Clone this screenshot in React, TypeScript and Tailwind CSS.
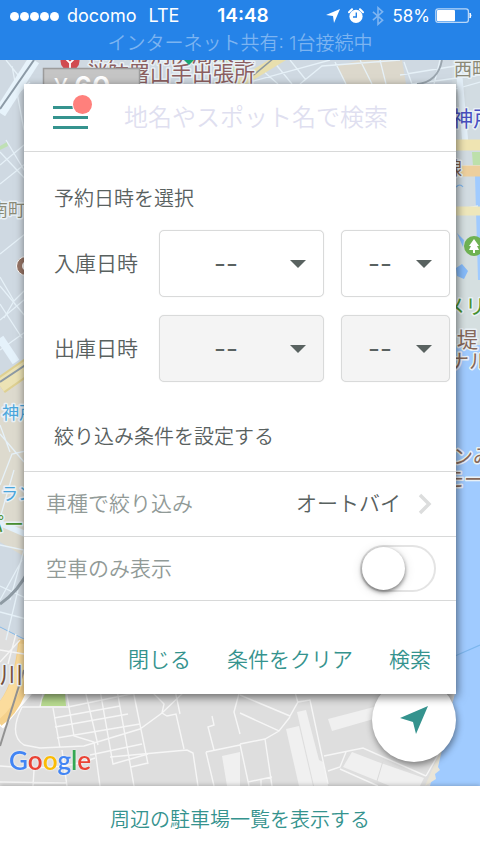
import { useState } from "react";

const teal = "#35938e";

function StatusBar() {
  return (
    <header className="relative z-10 flex h-[60px] shrink-0 flex-col bg-[#2583e8] text-white">
      <div className="grid h-8 grid-cols-3 items-center pr-2 pl-[10px]">
        <div className="flex items-center gap-2 text-[18px] leading-6 whitespace-nowrap">
          <div className="flex gap-px">
            {[0, 1, 2, 3, 4].map((n) => (
              <span key={n} className="size-[9px] rounded-full bg-white" />
            ))}
          </div>
          <span>docomo</span>
          <span className="pl-1">LTE</span>
        </div>
        <span className="pl-1 text-center text-[19px] leading-6 font-semibold">14:48</span>
        <div className="flex items-center justify-end gap-2 whitespace-nowrap">
          <svg width="14" height="14" viewBox="0 0 14 14" fill="#fff" aria-hidden="true">
            <path d="M14 0 8 14 7 7 0 6Z" />
          </svg>
          <svg width="16" height="16" viewBox="0 0 16 16" aria-hidden="true">
            <circle cx="8" cy="8.4" r="6.6" fill="#fff" />
            <path d="M1 4.2 4 1.2M15 4.2 12 1.2" stroke="#fff" strokeWidth="2" strokeLinecap="round" />
            <path d="M8.3 4.6V9H5" stroke="#2583e8" strokeWidth="1.4" fill="none" />
          </svg>
          <svg width="12" height="20" viewBox="0 0 13 20" fill="none" stroke="#7fb5f1" strokeWidth="1.7" aria-hidden="true">
            <path d="M1 5.5 11.5 14.5 6.5 19V1L11.5 5.5 1 14.5" />
          </svg>
          <div className="flex items-center gap-[5px]">
            <span className="text-[17px] leading-6">58%</span>
            <svg width="37" height="16" viewBox="0 0 37 16" aria-hidden="true">
              <rect x=".8" y=".8" width="32.6" height="13.6" rx="2.4" fill="none" stroke="#b9d7f8" strokeWidth="1.3" />
              <rect x="2" y="2" width="18" height="11.2" rx="1" fill="#fff" />
              <path d="M35 5q2 2.500 0 5Z" fill="#fff" stroke="#fff" />
            </svg>
          </div>
        </div>
      </div>
      <p className="text-center text-[19px] leading-6 font-[350] text-[#7cb4f1]">
        インターネット共有: 1台接続中
      </p>
    </header>
  );
}

function CityMap() {
  return (
    <svg
      className="absolute inset-0 size-full"
      viewBox="0 60 480 726"
      preserveAspectRatio="xMidYMid slice"
      aria-hidden="true"
    >
      <rect y="60" width="480" height="726" fill="#cfd9e2" />
      {/* districts */}
      <path d="M0 382 30 360V560L0 542Z" fill="#dddace" />
      <path d="M337 66 360 60H398L404 84H345ZM388 66 402 60 406 84H388ZM472 70 480 67V92H474Z" fill="#dcd8cc" />
      <path d="M452 60 480 60V350H452Z" fill="#d2dce2" />
      <path d="M452 215H480V345H452Z" fill="#d5dfe0" />
      <path d="M0 146 7 142 8 146 0 150ZM210 60H240L236 78Q220 72 210 60Z" fill="#bfe0b4" />
      <path d="M472 152H480V166H473Z" fill="#bde0ab" />
      {/* water */}
      <path d="M475 176H480V280H478ZM450 345H480V786H428L452 720Z" fill="#a0cbff" />
      <path d="M456 268 462 264 468 271 464 279 457 276ZM457 233 464 240 463 247Z" fill="#86bbfa" />
      <path d="M456 187Q460 183 463 187M455 656 480 645" stroke="#7db6ee" strokeWidth="1.200" fill="none" />
      {/* harbour ground */}
      <path d="M0 627 30 642V690H456L430 786H0Z" fill="#dedede" />
      <path d="M0 627 30 642" stroke="#83b8e8" fill="none" />
      <path d="M442 750 438 767 440 770 435 774 436 779 425 786 443 745Z" fill="#e9e5d8" />
      {/* piers and sheds */}
      <g fill="#f0f0f0">
        <path d="M297 712 306 710 319 760 323 762 328 786H314Z" />
        <path d="M286 729 299 726 313 786H299Z" />
        <path d="M328 719 374 707 377 718 332 731Z" />
        <path d="M352 752 378 762 424 778 420 786H390L343 767ZM222 756 240 752V786H227Z" />
      </g>
      <path d="M383 761 377 781" stroke="#dadada" />
      {/* streets, upper left */}
      <g fill="none" stroke="#e6f1f8" strokeWidth="1.300">
        <path d="M12 66 24 130M0 110 30 82M0 152 30 184M0 165 30 140M0 184 30 160M6 140 30 180M0 254 30 230M0 320 30 295M0 277 14 301 30 285M14 301 4 318M0 350 28 330M6 60 30 90" />
        <path d="M0 304 22 338M0 286 30 322" />
        <path d="M0 434 24 462M0 485 12 454 30 450M0 518 14 470M10 452 0 425M0 545 24 550 10 600M0 600 22 560M0 612 30 620M6 640 18 590M0 586 30 600" />
        <path d="M262 70 278 84M274 62 292 84M290 60 306 80M250 82 330 60M300 84 322 66 400 60M335 62 346 84M360 60 372 84M380 60 386 84M404 62 412 84M400 75 480 62M412 84 480 75M440 60 434 84" />
        <path d="M456 166H480M456 210 478 206M452 90 480 82" />
      </g>
      <path d="M34 60 0 113" stroke="#e7f3fb" strokeWidth="12" />
      <path d="M34 60 0 109" stroke="#8c9aa6" strokeWidth="2" />
      <path d="M458 60 466 150" stroke="#e3eff8" strokeWidth="6" />
      <path d="M417 84Q438 82 442 60" stroke="#9aa5ae" strokeWidth="1.800" fill="none" />
      <path d="M238 84 284 56" stroke="#e8dfae" strokeWidth="9" />
      <path d="M250 78 274 58" stroke="#8b98a0" strokeWidth="1.500" />
      <path d="M0 338 16 362" stroke="#e5f2fb" strokeWidth="8" />
      <path d="M0 386 30 365" stroke="#ded092" strokeWidth="17" />
      <path d="M0 386 30 365" stroke="#ece3b5" strokeWidth="13" />
      <path d="M0 382 30 362" stroke="#8d9aa4" strokeWidth="2" />
      <path d="M455 145H480" stroke="#efe4b2" strokeWidth="11" />
      <path d="M455 171H480" stroke="#edcf9d" strokeWidth="11" />
      <path d="M455 211H480" stroke="#eee7bb" strokeWidth="9" />
      <path d="M0 523 30 536" stroke="#e3f0fa" strokeWidth="6" />
      <path d="M0 604Q18 592 30 568" stroke="#8e9aa3" strokeWidth="3" fill="none" />
      {/* expressway */}
      <path d="M0 726Q16 706 30 690" stroke="#fff" strokeWidth="8" fill="none" />
      <path d="M-4 718Q22 700 28 640" stroke="#f5d18c" strokeWidth="19" fill="none" />
      <path d="M-4 714Q20 694 25 644" stroke="#fbdc9d" strokeWidth="12" fill="none" />
      <path d="M0 746 24 670" stroke="#929292" strokeWidth="2" />
      {/* streets, harbour */}
      <g fill="none" stroke="#f6f6f6" strokeWidth="1.400">
        <path d="M0 662 20 640M0 650 24 654M8 664 16 634" />
        <path d="M22 707H68L150 690M22 707Q8 735 24 745L40 748 84 746 140 729 162 713 186 690M53 708 60 748M66 690 74 736 94 742 100 786M85 690 98 745M100 690 113 764 148 754M117 690 134 786M133 690 148 764M40 707 43 694" />
        <path d="M54 718 120 706M55 727 128 714M57 738 140 724M90 755 142 744M110 757 187 750 193 753 198 786M131 767 148 763M0 766Q60 772 95 758M34 770 33 786M0 782 66 783M62 750 67 786" />
        <path d="M150 690 164 704 162 713 167 716 176 714 184 749M175 690 180 714M212 716 214 725 208 727 214 750M206 752 240 745M214 786 206 752M240 690 234 712 240 734" />
        <path d="M240 695 290 716 298 702 310 700 328 784M240 713 279 731 290 717M240 744 265 739 279 731M265 739 272 786M248 782 272 777M240 744 249 786M295 692 298 703M324 756 363 748 426 776M328 771 340 767 346 752M340 769 378 786M426 776 442 748M261 780V786" />
      </g>
      <path d="M42 700 45 694H65L66 706H41Z" fill="#b9dc91" />
      {/* labels and pins */}
      <g fontFamily="'Noto Sans', 'Noto Sans CJK JP', sans-serif" stroke="#e9f1f6" strokeWidth="3" paintOrder="stroke" strokeLinejoin="round">
        <g fill="#8c5f60" fontSize="21">
          <text x="87" y="62">神戸市消防局水上</text>
          <text x="87" y="81">消防署山手出張所</text>
        </g>
        <text x="454" y="76" fill="#8b8875" fontSize="18">西町</text>
        <text x="452" y="126" fill="#484fc0" fontSize="21">神戸</text>
        <text x="444" y="175" fill="#815f4c" fontSize="18">線</text>
        <text x="-9" y="216" fill="#8b8b77" fontSize="17">南町</text>
        <text x="444" y="314" fill="#489031" fontSize="21">メリケン</text>
        <text x="457" y="347" fill="#86685a" fontSize="21">堤</text>
        <text x="449" y="369" fill="#86685a" fontSize="20">ナル</text>
        <text x="2" y="419" fill="#4aa6dc" fontSize="17">神戸</text>
        <text x="1" y="500" fill="#4aa6dc" fontSize="17">ラン</text>
        <text x="-16" y="532" fill="#489031" fontSize="20">パー</text>
        <text x="453" y="464" fill="#86685a" fontSize="20">ンみ</text>
        <text x="444" y="487" fill="#86685a" fontSize="20">モー</text>
        <text x="0" y="683" fill="#77503d" fontSize="23">川</text>
      </g>
      <circle cx="70" cy="61" r="9.500" fill="#d14b50" />
      <path d="M65 58 70 63 75 58M70 63V69" stroke="#fff" strokeWidth="1.800" fill="none" />
      <path d="M184 60H194L189 65Z" fill="#16a673" />
      <circle cx="26" cy="266" r="9.500" fill="#977566" stroke="#fff" />
      <circle cx="27" cy="266" r="4" fill="none" stroke="#fff" strokeWidth="2" />
      <circle cx="474" cy="246" r="10" fill="#6fb253" />
      <path d="M474 239 479 246H477L479 250H475V253H473V250H469L471 246H469Z" fill="#fff" />
      <rect x="43.500" y="68.500" width="96" height="30" fill="#c5c5c5" stroke="#9c9c9c" strokeWidth="1.500" />
      <text x="54" y="97" fill="#fff" fontFamily="Inter, sans-serif" fontSize="25">¥</text>
      <text x="74" y="97" fill="#fff" fontFamily="Inter, sans-serif" fontSize="28" fontWeight="600">60</text>
    </svg>
  );
}

type PickerProps = { label: string; inset: string; muted?: boolean };

function Picker({ label, inset, muted }: PickerProps) {
  return (
    <div className="grid h-[67px] items-center">
      <select
        aria-label={label}
        disabled={muted}
        className={`${inset} ${
          muted ? "bg-[#f4f4f4]" : "bg-white"
        } col-start-1 row-start-1 h-full w-full appearance-none rounded-[5px] border border-[#d9dada] font-[Inter,sans-serif] text-[26px] leading-8 font-normal text-[#596260] opacity-100 shadow-[0_0_1px_#ddd]`}
      >
        <option>--</option>
      </select>
      <svg
        className="pointer-events-none col-start-1 row-start-1 mr-[18px] justify-self-end"
        width="16"
        height="8"
        viewBox="0 0 16 8"
        fill="#596260"
        aria-hidden="true"
      >
        <path d="M0 0H16L8 8Z" />
      </svg>
    </div>
  );
}

function GoogleMark() {
  return (
    <div
      className="absolute bottom-[10px] left-[9px] font-[Lato,sans-serif] text-[26px] leading-8 font-semibold drop-shadow-[0_0_1px_#fff]"
      aria-label="Google"
    >
      <span className="text-[#4285f4]">G</span>
      <span className="text-[#ea4335]">o</span>
      <span className="text-[#fbbc05]">o</span>
      <span className="text-[#4285f4]">g</span>
      <span className="text-[#34a853]">l</span>
      <span className="text-[#ea4335]">e</span>
    </div>
  );
}

export default function App() {
  const [vacantOnly, setVacantOnly] = useState(false);

  return (
    <div className="flex min-h-screen flex-col bg-white font-[Inter,'Noto_Sans_CJK_JP',sans-serif]">
      <StatusBar />
      <main className="relative flex flex-1 flex-col">
        <CityMap />
        <form
          className="relative z-10 mx-6 mt-6 bg-white font-[350] text-[#59615f] shadow-[1px_3px_9px_rgba(0,0,0,0.55)]"
          onSubmit={(e) => e.preventDefault()}
        >
          <div className="flex h-[68px] items-center gap-9 border-b border-[#d8d9d9] pr-6 pl-[29px]">
            <button type="button" aria-label="メニュー" className="relative flex w-[35px] shrink-0 flex-col gap-[7px]">
              <span className="h-[3px] bg-[#35938e]" />
              <span className="h-[3px] bg-[#35938e]" />
              <span className="h-[3px] bg-[#35938e]" />
              <span className="absolute -top-[11px] left-5 size-[19px] rounded-full bg-[#ff807c] ring-1 ring-white" />
            </button>
            <input
              type="search"
              aria-label="地名やスポット名で検索"
              placeholder="地名やスポット名で検索"
              className="h-9 min-w-0 flex-1 appearance-none bg-transparent text-[24px] leading-9 outline-none placeholder:text-[#dfdff0]"
            />
          </div>

          <div className="pt-[33px] pr-[6px] pb-5 pl-[30px]">
            <h2 className="text-[20px] leading-7">予約日時を選択</h2>
            <div className="mt-[17px] grid grid-cols-[88px_1fr_109px] items-center gap-x-[17px] gap-y-[18px] text-[21px] leading-7">
              <span>入庫日時</span>
              <Picker label="入庫日" inset="pl-[54px]" />
              <Picker label="入庫時刻" inset="pl-[26px]" />
              <span>出庫日時</span>
              <Picker label="出庫日" inset="pl-[54px]" muted />
              <Picker label="出庫時刻" inset="pl-[26px]" muted />
            </div>
            <h2 className="mt-[41px] text-[20px] leading-7">絞り込み条件を設定する</h2>
          </div>

          <button
            type="button"
            className="flex h-[65px] w-full items-center border-t border-[#d8d9d9] pr-6 pl-[22px] text-[21px] leading-7"
          >
            <span className="text-[#919a97]">車種で絞り込み</span>
            <span className="ml-auto">オートバイ</span>
            <svg className="ml-[17px]" width="14" height="22" viewBox="0 0 14 22" fill="none" stroke="#dcdddd" strokeWidth="3.500" aria-hidden="true">
              <path d="M2 2 11 11 2 20" />
            </svg>
          </button>

          <div className="flex h-[65px] items-center justify-between border-y border-[#d8d9d9] pr-5 pl-[22px] text-[21px] leading-7">
            <label htmlFor="vacant" className="text-[#919a97]">
              空車のみ表示
            </label>
            <input
              id="vacant"
              type="checkbox"
              role="switch"
              checked={vacantOnly}
              onChange={(e) => setVacantOnly(e.target.checked)}
              className="flex h-[47px] w-[76px] appearance-none rounded-full border-2 border-[#e4e4e4] bg-white before:size-[43px] before:rounded-full before:bg-white before:shadow-[0_2px_4px_rgba(0,0,0,0.5),0_2px_12px_rgba(0,0,0,0.12)] before:content-[''] checked:bg-[#35938e] checked:before:ml-auto"
            />
          </div>

          <div className="flex justify-end gap-9 pt-11 pr-[25px] pb-5 text-[21px] leading-[29px] text-[#35938e]">
            <button type="button">閉じる</button>
            <button type="reset">条件をクリア</button>
            <button type="submit">検索</button>
          </div>
        </form>

        <button
          type="button"
          aria-label="現在地"
          className="relative -mt-4 mr-6 mb-6 flex size-[84px] items-center justify-center self-end rounded-full bg-white shadow-[1px_3px_7px_rgba(0,0,0,0.45)]"
        >
          <svg width="28" height="28" viewBox="0 0 28 28" fill={teal} aria-hidden="true">
            <path d="M28 0 16 28 13 16 0 12Z" />
          </svg>
        </button>
        <GoogleMark />
      </main>
      <footer className="relative z-10 bg-white shadow-[0_-1px_4px_rgba(0,0,0,0.2)]">
        <button type="button" className="h-[66px] w-full pt-px text-[20px] leading-7 font-[350] text-[#35938e]">
          周辺の駐車場一覧を表示する
        </button>
      </footer>
    </div>
  );
}
